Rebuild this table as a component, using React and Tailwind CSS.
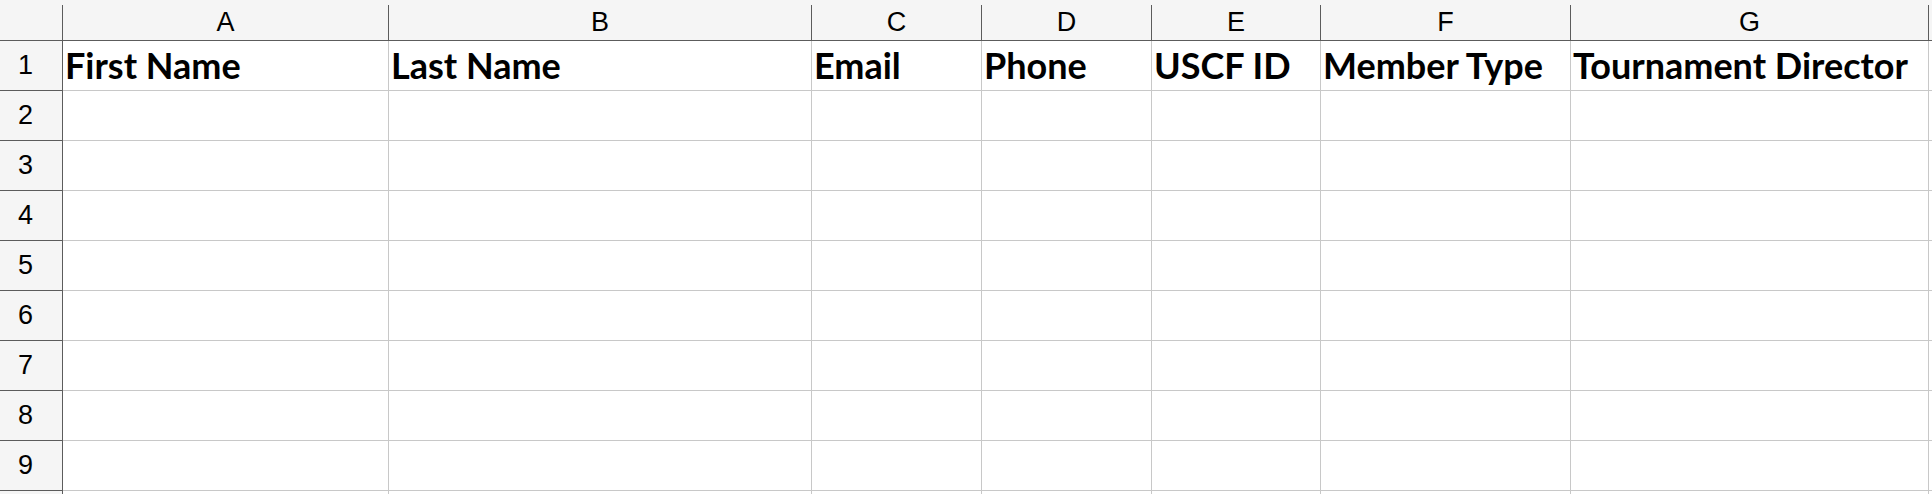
const columns = [
  { letter: "A", width: "w-[326px]", title: "First Name" },
  { letter: "B", width: "w-[423px]", title: "Last Name" },
  { letter: "C", width: "w-[170px]", title: "Email" },
  { letter: "D", width: "w-[170px]", title: "Phone" },
  { letter: "E", width: "w-[169px]", title: "USCF ID" },
  { letter: "F", width: "w-[250px]", title: "Member Type" },
  { letter: "G", width: "w-[358px]", title: "Tournament Director" },
];

const rows = [1, 2, 3, 4, 5, 6, 7, 8, 9, null];

export default function App() {

  return (

    <div className="h-[494px] w-[1932px] overflow-hidden bg-white">

      {/* column header strip */}
      <div className="flex h-[41px] border-b border-[#5c5c5c] bg-[#f5f5f5] font-['Liberation_Sans',Arial,sans-serif] text-[27px] text-black">

        <div className="h-full w-[63px] shrink-0 pt-[5px]">
          <div className="h-full border-r border-[#5c5c5c]" />
        </div>

        {columns.map((col) => (
          <div key={col.letter} className={`${col.width} h-full shrink-0 pt-[5px]`}>
            <div className="flex h-full items-center justify-center border-r border-[#5c5c5c] leading-none">
              {col.letter}
            </div>
          </div>
        ))}

        <div className="h-full flex-1" />

      </div>

      {rows.map((row, i) => (

        <div key={i} className="flex h-[50px]">

          <div className="flex w-[63px] shrink-0 items-center justify-center border-r border-b border-[#5c5c5c] bg-[#f5f5f5] pr-[11px] font-['Liberation_Sans',Arial,sans-serif] text-[27px] leading-none text-black">
            {row}
          </div>

          {columns.map((col) => (
            <div
              key={col.letter}
              className={`${col.width} flex shrink-0 items-end overflow-visible whitespace-nowrap border-r border-b border-[#c8c8c8] pb-[3px] pl-[2px] font-['Lato',sans-serif] text-[36px] font-bold leading-[1.2] text-black`}
            >
              {row === 1 ? col.title : ""}
            </div>
          ))}

          <div className="flex-1 border-b border-[#c8c8c8]" />

        </div>

      ))}

    </div>

  );
}
